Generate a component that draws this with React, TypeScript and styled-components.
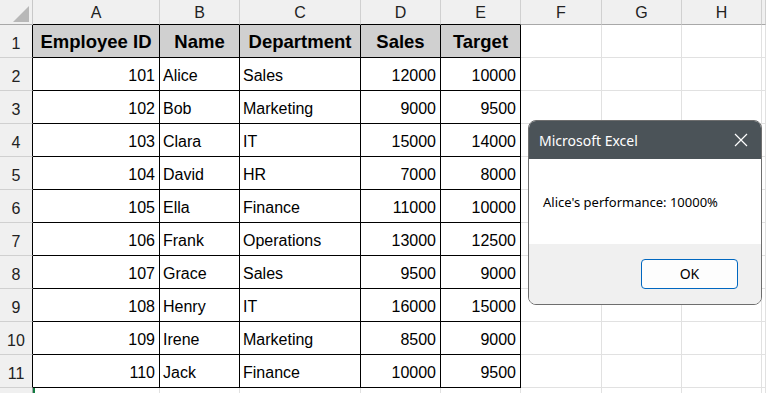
import styled, { createGlobalStyle } from 'styled-components';

const Global = createGlobalStyle`
  html, body {
    margin: 0;
    padding: 0;
    background: #ffffff;
    overflow: hidden;
  }
`;

type Row = [number, string, string, number, number];

const rows: Row[] = [
    [101, 'Alice', 'Sales', 12000, 10000],
    [102, 'Bob', 'Marketing', 9000, 9500],
    [103, 'Clara', 'IT', 15000, 14000],
    [104, 'David', 'HR', 7000, 8000],
    [105, 'Ella', 'Finance', 11000, 10000],
    [106, 'Frank', 'Operations', 13000, 12500],
    [107, 'Grace', 'Sales', 9500, 9000],
    [108, 'Henry', 'IT', 16000, 15000],
    [109, 'Irene', 'Marketing', 8500, 9000],
    [110, 'Jack', 'Finance', 10000, 9500],
];

const headers = ['Employee ID', 'Name', 'Department', 'Sales', 'Target'];
const letters = ['A', 'B', 'C', 'D', 'E', 'F', 'G', 'H'];

function App() {
    return (
        <Page>
            <Global/>
            <Sheet>
                <Corner><SelectAll/></Corner>
                {letters.map((l, i) => (
                    <ColHead key={l} $table={i < 5}>{l}</ColHead>
                ))}
                <ColHead $table={false}/>

                <RowHead>1</RowHead>
                {headers.map(h => <HeadCell key={h}>{h}</HeadCell>)}
                <Cell/><Cell/><Cell/><Cell/>

                {rows.map((r, i) => (
                    <Line key={r[0]} row={r} num={i + 2}/>
                ))}

                <RowHead $plain/>
                <Cell $selected/>
                <Cell/><Cell/><Cell/><Cell/><Cell/><Cell/><Cell/><Cell/>
            </Sheet>

            <Dialog>
                <TitleBar>
                    <Caption>Microsoft Excel</Caption>
                    <Close>
                        <svg width="14" height="14" viewBox="0 0 14 14">
                            <path d="M1 1 L13 13 M13 1 L1 13" stroke="#ffffff" strokeWidth="1.2" fill="none"/>
                        </svg>
                    </Close>
                </TitleBar>
                <Body>Alice's performance: 10000%</Body>
                <Footer>
                    <OkButton>OK</OkButton>
                </Footer>
            </Dialog>
        </Page>
    );
}

function Line({row, num}: { row: Row; num: number }) {
    return (
        <>
            <RowHead>{num}</RowHead>
            <DataCell $align="right">{row[0]}</DataCell>
            <DataCell>{row[1]}</DataCell>
            <DataCell>{row[2]}</DataCell>
            <DataCell $align="right">{row[3]}</DataCell>
            <DataCell $align="right">{row[4]}</DataCell>
            <Cell/><Cell/><Cell/><Cell/>
        </>
    );
}

export default App;

const Page = styled.div`
  position: relative;
  width: 766px;
  height: 393px;
  overflow: hidden;
  font-family: "Liberation Sans", Arial, sans-serif;
`;

const Sheet = styled.div`
  display: grid;
  grid-template-columns: 33px 127px 80px 121px 80px 80px 81px 80px 80px 1fr;
  grid-template-rows: 25px repeat(12, 33px);
`;

const Corner = styled.div`
  position: relative;
  background: #f0f0f0;
  border-right: 1px solid #c8c8c8;
  border-bottom: 1px solid #a8a8a8;
`;

const SelectAll = styled.div`
  position: absolute;
  left: 13px;
  top: 6px;
  width: 16px;
  height: 16px;
  background: #b8b8b8;
  clip-path: polygon(100% 0, 100% 100%, 0 100%);
`;

const ColHead = styled.div<{ $table: boolean }>`
  background: #f0f0f0;
  border-right: 1px solid #d0d0d0;
  border-bottom: 1px solid ${p => (p.$table ? '#000000' : '#a8a8a8')};
  display: flex;
  align-items: center;
  justify-content: center;
  font-size: 16px;
  color: #222222;
  padding-top: 1px;
`;

const RowHead = styled.div<{ $plain?: boolean }>`
  background: #f0f0f0;
  border-right: 1px solid ${p => (p.$plain ? '#a8a8a8' : '#000000')};
  border-bottom: 1px solid #d0d0d0;
  display: flex;
  align-items: flex-end;
  justify-content: center;
  padding-bottom: 4px;
  font-size: 16px;
  color: #222222;
`;

const Cell = styled.div<{ $selected?: boolean }>`
  border-right: 1px solid #e1e1e1;
  border-bottom: 1px solid #e1e1e1;
  ${p => p.$selected && 'box-shadow: inset 2px 0 0 #107c41;'}
`;

const DataCell = styled.div<{ $align?: 'left' | 'right' }>`
  border-right: 1px solid #000000;
  border-bottom: 1px solid #000000;
  display: flex;
  align-items: flex-end;
  justify-content: ${p => (p.$align === 'right' ? 'flex-end' : 'flex-start')};
  padding: 0 4px 5px 3px;
  font-size: 16px;
  color: #000000;
  white-space: nowrap;
  overflow: hidden;
`;

const HeadCell = styled(DataCell)`
  background: #d0d0d0;
  justify-content: center;
  padding: 0 1px 4px;
  font-weight: bold;
  font-size: 18.5px;
`;

const Dialog = styled.div`
  position: absolute;
  left: 528px;
  top: 120px;
  width: 234px;
  height: 185px;
  border: 1px solid #6e6e6e;
  border-radius: 8px;
  overflow: hidden;
  box-sizing: border-box;
  display: flex;
  flex-direction: column;
  background: #ffffff;
  font-family: "Noto Sans", "Open Sans", sans-serif;
`;

const TitleBar = styled.div`
  height: 38px;
  background: #4b5358;
  display: flex;
  align-items: center;
  justify-content: space-between;
  padding: 0 13px 0 10px;
`;

const Caption = styled.span`
  color: #ffffff;
  font-size: 14px;
`;

const Close = styled.span`
  display: flex;
`;

const Body = styled.div`
  height: 85px;
  display: flex;
  align-items: center;
  padding-left: 14px;
  font-size: 13px;
  color: #000000;
`;

const Footer = styled.div`
  flex: 1;
  background: #f0f0f0;
  display: flex;
  align-items: center;
  justify-content: flex-end;
  padding-right: 23px;
`;

const OkButton = styled.button`
  width: 97px;
  height: 30px;
  margin-top: -1px;
  border: 1px solid #0067c0;
  border-radius: 4px;
  background: #fdfdfd;
  font-family: inherit;
  font-size: 14px;
  color: #000000;
`;
